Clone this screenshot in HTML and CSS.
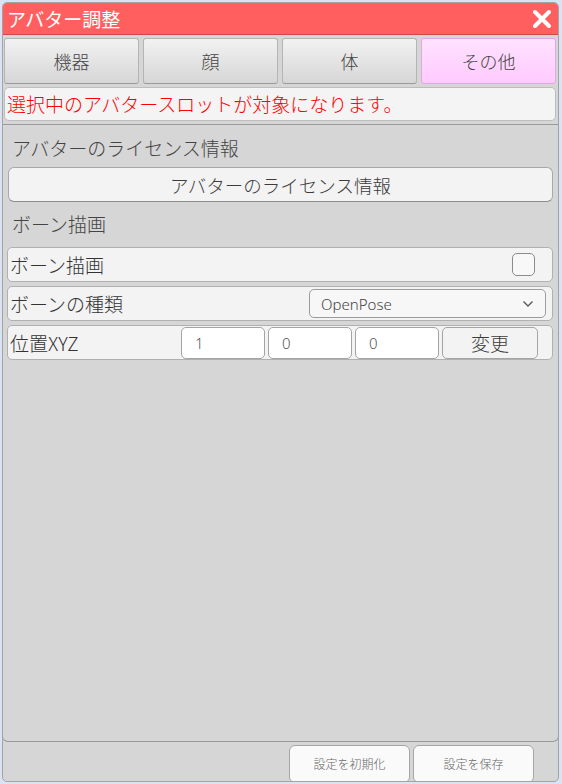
FILE: index.html
```html
<!DOCTYPE html>
<html lang="ja">
<head>
<meta charset="utf-8">
<title>アバター調整</title>
<link rel="stylesheet" href="styles.css">
</head>
<body>
<div class="window">
  <div class="titlebar">
    <span class="title">アバター調整</span>
    <svg class="close" width="20" height="20" viewBox="0 0 20 20"><path d="M3 3 L17 17 M17 3 L3 17" stroke="#fff" stroke-width="4" stroke-linecap="round"/></svg>
  </div>
  <div class="tabs">
    <div class="tab">機器</div>
    <div class="tab">顔</div>
    <div class="tab">体</div>
    <div class="tab active">その他</div>
  </div>
  <div class="notice">選択中のアバタースロットが対象になります。</div>
  <div class="panel">
    <div class="label first">アバターのライセンス情報</div>
    <div class="wide-btn">アバターのライセンス情報</div>
    <div class="label second">ボーン描画</div>
    <div class="rows">
      <div class="row">
        <span class="row-label">ボーン描画</span>
        <span class="checkbox"></span>
      </div>
      <div class="row">
        <span class="row-label">ボーンの種類</span>
        <div class="select">
          <span>OpenPose</span>
          <svg width="12" height="8" viewBox="0 0 12 8"><path d="M1.5 1.5 L6 6 L10.5 1.5" fill="none" stroke="#555" stroke-width="1.3"/></svg>
        </div>
      </div>
      <div class="row">
        <span class="row-label">位置XYZ</span>
        <div class="inputs">
          <div class="input">1</div>
          <div class="input">0</div>
          <div class="input">0</div>
          <div class="btn">変更</div>
        </div>
      </div>
    </div>
  </div>
  <div class="footer">
    <div class="foot-btn">設定を初期化</div>
    <div class="foot-btn">設定を保存</div>
  </div>
</div>
</body>
</html>
```
FILE: styles.css
```css
html, body {
  margin: 0;
  padding: 0;
}
body {
  background: #d9e3f3;
  font-family: "Noto Sans CJK JP", "Noto Sans", sans-serif;
  font-weight: 300;
  width: 562px;
  height: 784px;
  overflow: hidden;
}
.window {
  box-sizing: border-box;
  margin: 2px 3px 0 2px;
  height: 780px;
  border: 1px solid #a4a4a4;
  border-radius: 5px;
  background: #d6d6d6;
  display: flex;
  flex-direction: column;
  overflow: hidden;
}
.titlebar {
  height: 31px;
  background: #ff5f5f;
  border-bottom: 1px solid #d04848;
  display: flex;
  align-items: center;
  justify-content: space-between;
  padding: 0 6px 0 4px;
  border-radius: 4px 4px 0 0;
}
.title {
  color: #fff;
  font-size: 19px;
  font-weight: 400;
  line-height: 31px;
}
.close {
  display: block;
}
.tabs {
  display: flex;
  gap: 4px;
  padding: 3px 2px 0 1px;
}
.tab {
  flex: 1;
  box-sizing: border-box;
  height: 46px;
  border: 1px solid #b4b4b4;
  border-bottom-color: #9a9a9a;
  border-radius: 3px;
  background: linear-gradient(#f2f2f2, #d6d6d6);
  color: #444;
  font-size: 18px;
  display: flex;
  align-items: center;
  justify-content: center;
}
.tab.active {
  background: linear-gradient(#ffe2ff, #ffcaff);
  border-color: #e0a8e0;
}
.notice {
  box-sizing: border-box;
  margin: 3px 2px 0 1px;
  height: 34px;
  background: #f4f4f4;
  border: 1px solid #bdbdbd;
  border-radius: 5px;
  color: #ff0000;
  font-size: 19px;
  line-height: 32px;
  padding-left: 2px;
}
.panel {
  flex: 1;
  margin-top: 3px;
  border: 1px solid #9a9a9a;
  border-left-color: #a8a8a8;
  border-radius: 0 0 6px 6px;
  padding: 11px 5px 0 4px;
  margin-left: -1px;
  margin-right: -1px;
}
.label {
  font-size: 19px;
  color: #444;
  line-height: 24px;
  padding-left: 5px;
}
.wide-btn {
  box-sizing: border-box;
  margin: 7px 0 0 1px;
  height: 35px;
  background: #f3f3f3;
  border: 1px solid #a8a8a8;
  border-bottom-color: #8c8c8c;
  border-radius: 6px;
  color: #3c3c3c;
  font-size: 18.5px;
  display: flex;
  align-items: center;
  justify-content: center;
}
.label.second {
  margin-top: 10px;
}
.rows {
  margin-top: 11px;
  display: flex;
  flex-direction: column;
  gap: 4px;
}
.row {
  box-sizing: border-box;
  height: 35px;
  background: #f3f3f3;
  border: 1px solid #b0b0b0;
  border-radius: 5px;
  display: flex;
  align-items: center;
  justify-content: space-between;
  padding: 0 17px 0 2px;
}
.row-label {
  font-size: 19px;
  color: #333;
}
.checkbox {
  box-sizing: border-box;
  width: 23px;
  height: 23px;
  border: 1px solid #8c8c8c;
  border-radius: 5px;
  background: #f8f8f8;
}
.row:nth-child(2) {
  padding-right: 6px;
}
.select {
  box-sizing: border-box;
  width: 237px;
  height: 29px;
  background: #f7f7f7;
  border: 1px solid #9c9c9c;
  border-radius: 5px;
  display: flex;
  align-items: center;
  justify-content: space-between;
  padding: 0 11px 0 11px;
  font-family: "Noto Sans", sans-serif;
  font-size: 15px;
  color: #444;
}
.row:nth-child(3) {
  padding-right: 14px;
}
.inputs {
  display: flex;
  gap: 3px;
}
.input {
  box-sizing: border-box;
  width: 84px;
  height: 32px;
  background: #fff;
  border: 1px solid #a4a4a4;
  border-radius: 5px;
  padding-left: 13px;
  font-family: "Noto Sans", sans-serif;
  font-size: 15px;
  line-height: 30px;
  color: #555;
}
.btn {
  box-sizing: border-box;
  width: 96px;
  height: 32px;
  background: #f3f3f3;
  border: 1px solid #a4a4a4;
  border-radius: 5px;
  font-size: 19px;
  color: #3c3c3c;
  display: flex;
  align-items: center;
  justify-content: center;
}
.footer {
  height: 36px;
  display: flex;
  justify-content: flex-end;
  gap: 3px;
  padding: 3px 24px 0 0;
}
.foot-btn {
  box-sizing: border-box;
  width: 121px;
  height: 38px;
  background: #fafafa;
  border: 1px solid #a6a6a6;
  border-radius: 6px;
  font-size: 12px;
  color: #666;
  display: flex;
  align-items: center;
  justify-content: center;
  padding-bottom: 2px;
}
```
